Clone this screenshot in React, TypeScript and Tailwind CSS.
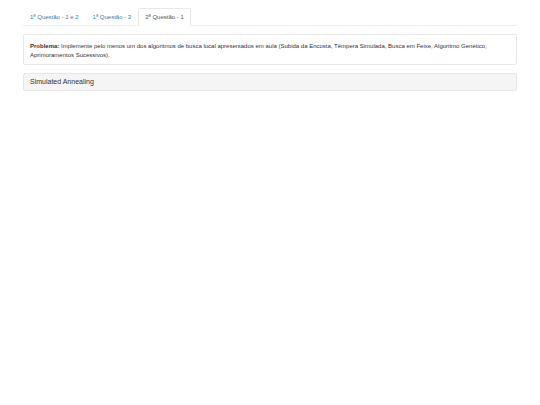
import { useState } from "react";
import clsx from "clsx";

const tabs = ["1ª Questão - 1 e 2", "1ª Questão - 3", "2ª Questão - 1"];

function App() {
  const [active, setActive] = useState(2);

  return (
    <main className="px-[23px] pt-2 font-['Liberation_Sans',Arial,sans-serif] text-[6px] leading-[9px] text-[#333333]">
      {/* TABS */}
      <div role="tablist" className="flex border-b border-[#eeeeee]">
        {tabs.map((tab, index) => (
          <button
            key={tab}
            type="button"
            role="tab"
            aria-selected={active === index}
            onClick={() => setActive(index)}
            className={clsx(
              "-mb-px cursor-pointer rounded-t-xs border px-1.5 py-1 leading-[8px]",
              active === index
                ? "border-[#e8e8e8] border-b-white bg-white text-[#555555]"
                : "border-transparent text-[#337ab7]",
            )}
          >
            {tab}
          </button>
        ))}
      </div>

      <div className="mt-2 flex flex-col gap-2">
        {/* PROBLEM */}
        <section className="rounded-xs border border-[#e8e8e8] bg-white px-1.5 pt-[7px] pb-1">
          <p>
            <strong className="font-bold">Problema:</strong> Implemente pelo
            menos um dos algoritmos de busca local apresentados em aula (Subida
            da Encosta, Têmpera Simulada, Busca em Feixe, Algoritmo Genético,
            Aprimoramentos Sucessivos).
          </p>
        </section>

        {/* RESULT */}
        <section className="rounded-xs border border-[#e8e8e8] bg-[#f5f5f5] px-1.5 py-1">
          <h3 className="text-[7px] leading-[8px]">Simulated Annealing</h3>
        </section>
      </div>
    </main>
  );
}

export default App;
